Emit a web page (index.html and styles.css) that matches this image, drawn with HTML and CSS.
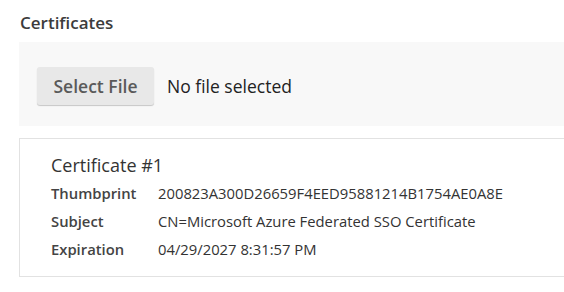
FILE: index.html
```html
<!DOCTYPE html>
<html lang="en">
<head>
  <meta charset="UTF-8">
  <meta name="viewport" content="width=device-width, initial-scale=1.0">
  <title>Certificates</title>
  <link rel="stylesheet" href="styles.css">
</head>
<body>
  <div class="section">
    <h3 class="section-title">Certificates</h3>

    <div class="upload-panel">
      <button class="select-file" type="button">Select File</button>
      <span class="file-name">No file selected</span>
    </div>

    <div class="cert-card">
      <div class="cert-title">Certificate #1</div>
      <div class="cert-row">
        <span class="cert-label">Thumbprint</span>
        <span class="cert-value">200823A300D26659F4EED95881214B1754AE0A8E</span>
      </div>
      <div class="cert-row">
        <span class="cert-label">Subject</span>
        <span class="cert-value">CN=Microsoft Azure Federated SSO Certificate</span>
      </div>
      <div class="cert-row">
        <span class="cert-label">Expiration</span>
        <span class="cert-value">04/29/2027 8:31:57 PM</span>
      </div>
    </div>
  </div>
</body>
</html>
```

FILE: styles.css
```css
body {
  font-family: 'Open Sans', 'Noto Sans', sans-serif;
  margin: 0;
  padding: 0;
  background-color: white;
  color: #333;
  overflow: hidden;
}

.section {
  width: 600px;
  padding-left: 19px;
}

.section-title {
  margin: 0 0 9px 0;
  padding: 13px 0 0 1px;
  font-size: 17px;
  font-weight: 600;
  line-height: 20px;
  color: #3c3c3c;
}

.upload-panel {
  display: flex;
  align-items: center;
  gap: 13px;
  height: 84px;
  padding: 4px 0 0 18px;
  box-sizing: border-box;
  background-color: #f8f8f8;
}

.select-file {
  width: 117px;
  height: 38px;
  padding: 0;
  font-family: inherit;
  font-size: 17.5px;
  font-weight: 600;
  color: #5a5a5a;
  background-color: #e8e8e8;
  border: none;
  border-radius: 3px;
  box-shadow: 0 1px 1px rgba(0, 0, 0, 0.2);
  cursor: pointer;
}

.file-name {
  font-size: 17.5px;
  color: #222;
}

.cert-card {
  margin-top: 12px;
  height: 139px;
  box-sizing: border-box;
  border: 1px solid #e2e2e2;
  padding: 14px 0 0 31px;
}

.cert-title {
  font-size: 18px;
  line-height: 24px;
  color: #333;
  margin-bottom: 2px;
}

.cert-row {
  display: flex;
  font-size: 14.8px;
  line-height: 28px;
}

.cert-label {
  width: 107px;
  font-weight: 600;
  color: #444;
}

.cert-value {
  color: #333;
}
```
